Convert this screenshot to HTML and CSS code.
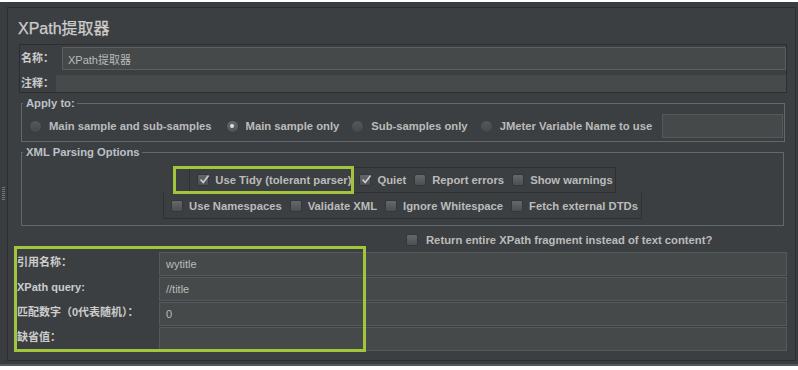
FILE: index.html
```html
<!DOCTYPE html>
<html lang="zh">
<head>
<meta charset="utf-8">
<title>XPath提取器</title>
<link rel="stylesheet" href="styles.css">
</head>
<body>
<div class="frame">
  <div class="gutter"><div class="grip"></div></div>
  <div class="panel">
    <h1 class="title">XPath提取器</h1>

    <div class="namebox">
      <div class="nrow nrow-name">
        <span class="nlabel nlabel-name">名称：</span>
        <div class="field field-name">XPath提取器</div>
      </div>
      <div class="nrow nrow-comment">
        <span class="nlabel nlabel-comment">注释：</span>
        <div class="field field-comment"></div>
      </div>
    </div>

    <fieldset class="group group-apply">
      <legend class="legend">Apply to:</legend>
      <div class="radios">
        <span class="radio"></span><span class="opt">Main sample and sub-samples</span>
        <span class="radio on"></span><span class="opt">Main sample only</span>
        <span class="radio tight"></span><span class="opt">Sub-samples only</span>
        <span class="radio tight"></span><span class="opt">JMeter Variable Name to use</span>
        <div class="field field-var"></div>
      </div>
    </fieldset>

    <fieldset class="group group-xml">
      <legend class="legend">XML Parsing Options</legend>
      <div class="cbrow cbrow-1">
        <div class="hl hl-tidy"></div>
        <span class="cb on"><svg viewBox="0 0 12 12"><path d="M2.6 5.6 L5.2 8.6 L10.6 1.6"/></svg></span><span class="opt">Use Tidy (tolerant parser)</span>
        <span class="cb on"><svg viewBox="0 0 12 12"><path d="M2.6 5.6 L5.2 8.6 L10.6 1.6"/></svg></span><span class="opt">Quiet</span>
        <span class="cb"></span><span class="opt">Report errors</span>
        <span class="cb"></span><span class="opt">Show warnings</span>
      </div>
      <div class="cbrow cbrow-2">
        <span class="cb"></span><span class="opt">Use Namespaces</span>
        <span class="cb"></span><span class="opt">Validate XML</span>
        <span class="cb"></span><span class="opt">Ignore Whitespace</span>
        <span class="cb"></span><span class="opt">Fetch external DTDs</span>
      </div>
    </fieldset>

    <div class="return-row">
      <span class="cb"></span><span class="opt">Return entire XPath fragment instead of text content?</span>
    </div>

    <div class="params">
      <div class="hl hl-params"></div>
      <span class="plabel">引用名称：</span><div class="field pfield">wytitle</div>
      <span class="plabel">XPath query:</span><div class="field pfield">//title</div>
      <span class="plabel">匹配数字（0代表随机）：</span><div class="field pfield">0</div>
      <span class="plabel">缺省值：</span><div class="field pfield"></div>
    </div>
  </div>
</div>
</body>
</html>
```
FILE: styles.css
```css
html, body {
  margin: 0;
  padding: 0;
  background: #ffffff;
}

body {
  font-family: "Liberation Sans", "Noto Sans CJK SC", Arial, sans-serif;
  color: #bbbbbb;
}

.frame {
  margin-top: 2px;
  width: 798px;
  height: 364px;
  box-sizing: border-box;
  padding: 5px 2px 3px 0;
  background: #3a3d3f;
  display: flex;
  border-bottom: 2px solid #55585a;
}

.gutter {
  width: 7px;
  flex: none;
  display: flex;
  justify-content: center;
  padding-top: 180px;
  box-sizing: border-box;
}

.grip {
  width: 3px;
  height: 14px;
  background: repeating-linear-gradient(#8a8d8f 0 1px, transparent 1px 2px);
  opacity: 0.7;
}

.panel {
  flex: 1;
  background: #3c3f41;
  border: 1px solid #2b2d2f;
  display: flex;
  flex-direction: column;
  align-items: stretch;
  min-width: 0;
}

.title {
  margin: 0 0 4px 10px;
  padding-top: 10px;
  font-size: 16px;
  line-height: 22px;
  font-weight: normal;
  color: #cdcdcd;
  -webkit-text-stroke: 0.25px #cdcdcd;
}

/* name / comment box */
.namebox {
  margin: 0 8px 0 11px;
  border: 1px solid #2c2e30;
  display: flex;
  flex-direction: column;
}

.nrow {
  display: flex;
  align-items: center;
}

.nrow-name {
  padding-top: 2px;
  height: 30px;
  box-sizing: border-box;
  align-items: flex-start;
}

.nrow-comment {
  height: 17px;
}

.nlabel {
  font-size: 11px;
  font-weight: bold;
  color: #cccccc;
  padding-left: 1px;
  flex: none;
}

.nlabel-name {
  width: 41px;
  line-height: 23px;
}

.nlabel-comment {
  width: 35px;
  line-height: 17px;
}

.field {
  background: #45494a;
  box-sizing: border-box;
  font-size: 11px;
  color: #bbbbbb;
  display: flex;
  align-items: center;
  padding-left: 5px;
}

.field-name {
  flex: 1;
  height: 23px;
  border: 1px solid #5b5f61;
}

.field-comment {
  flex: 1;
  height: 17px;
  background: #464a4b;
}

/* groups */
.group {
  margin: 3px 10px 0 13px;
  padding: 4px 0 3px 0;
  border: 1px solid #65686a;
  min-width: 0;
}

.group-xml {
  margin-right: 11px;
  padding: 8px 0 6px 0;
  display: flex;
  flex-direction: column;
  align-items: center;
}

.legend {
  font-size: 11.25px;
  font-weight: bold;
  line-height: 14px;
  padding: 0 2px 0 3px;
  margin-left: 1px;
  color: #bcc2c8;
}

.radios {
  display: flex;
  align-items: center;
  height: 24px;
  padding-left: 7px;
}

.opt {
  font-size: 11.25px;
  font-weight: bold;
  color: #bbbbbb;
  white-space: nowrap;
}

.radio {
  width: 13px;
  height: 13px;
  box-sizing: border-box;
  border-radius: 50%;
  background: linear-gradient(#55585a, #46494b);
  border: 1px solid #3a3c3e;
  flex: none;
  margin-right: 7px;
  margin-left: 14px;
  position: relative;
}

.radio.tight {
  margin-left: 12px;
}

.radio:first-child {
  margin-left: 0;
}

.radio.on {
  background: linear-gradient(#66696b, #505355);
}

.radio.on::after {
  content: "";
  position: absolute;
  left: 3.5px;
  top: 3.5px;
  width: 4px;
  height: 4px;
  border-radius: 50%;
  background: #e0e0e0;
}

.field-var {
  margin-left: 10px;
  margin-right: 1px;
  flex: 1;
  height: 24px;
  border: 1px solid #55595b;
}

/* checkbox rows */
.cbrow {
  display: flex;
  align-items: center;
  height: 26px;
  box-sizing: border-box;
  border: 1px solid #2e3032;
  padding: 0 2px 0 0;
  position: relative;
}

.cbrow-2 {
  border-top: none;
  height: 26px;
  padding-right: 3px;
}

.cb {
  width: 12px;
  height: 12px;
  box-sizing: border-box;
  border-radius: 2px;
  background: linear-gradient(#65686a, #4c4f51);
  border: 1px solid #34373a;
  flex: none;
  margin-left: 7px;
  margin-right: 6px;
  position: relative;
}

.cbrow .cb + .opt + .cb {
  margin-left: 8px;
}

.cb svg {
  position: absolute;
  left: 0;
  top: -1px;
  width: 12px;
  height: 12px;
  overflow: visible;
}

.cb svg path {
  fill: none;
  stroke: #cfcfcf;
  stroke-width: 1.6;
}

.hl {
  position: absolute;
  border: 3px solid #a3c53c;
  box-sizing: border-box;
  pointer-events: none;
}

.hl-tidy {
  left: -17px;
  top: -2px;
  width: 181px;
  height: 28px;
}

.return-row {
  display: flex;
  align-items: center;
  height: 24px;
  margin-top: 2px;
  padding-left: 391px;
}

.return-row .cb {
  margin-right: 8px;
}

/* parameter grid */
.params {
  position: relative;
  display: grid;
  grid-template-columns: 142px 1fr;
  grid-auto-rows: 24px;
  row-gap: 1px;
  margin: 0 8px 0 9px;
}

.plabel {
  font-size: 11px;
  font-weight: bold;
  color: #cccccc;
  line-height: 20px;
  white-space: nowrap;
}

.pfield {
  border: 1px solid #55595b;
  padding-left: 6px;
}

.hl-params {
  left: -3px;
  top: -6px;
  width: 352px;
  height: 106px;
}
```
